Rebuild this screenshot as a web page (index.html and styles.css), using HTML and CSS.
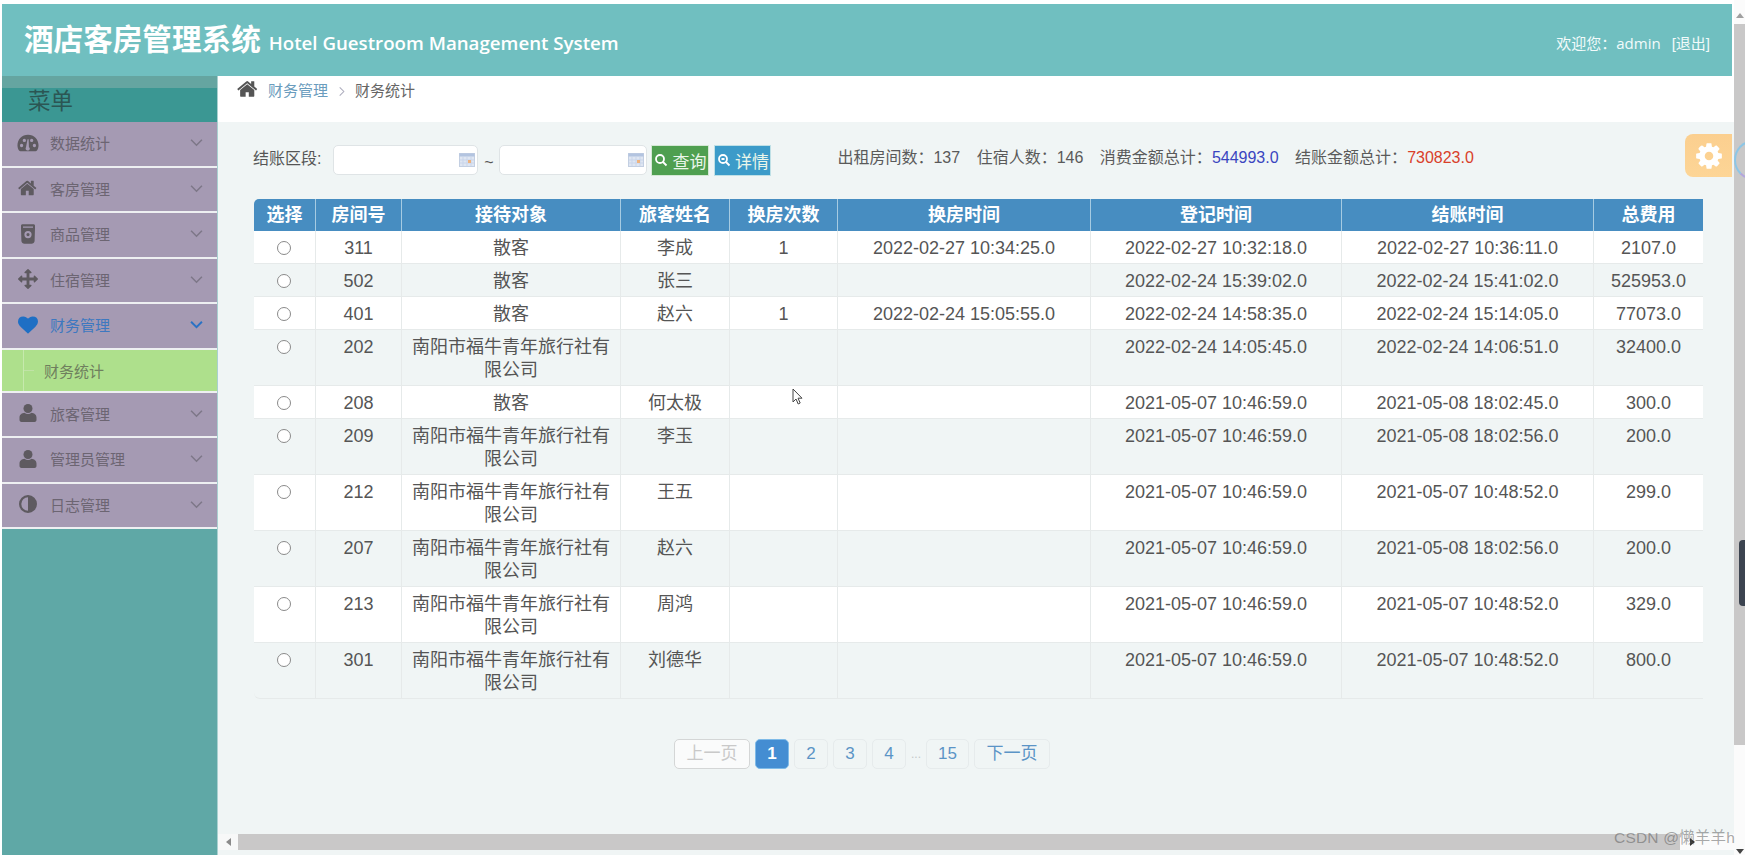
FILE: index.html
```html
<!DOCTYPE html>
<html lang="zh">
<head>
<meta charset="utf-8">
<title>酒店客房管理系统</title>
<link rel="stylesheet" href="styles.css">
</head>
<body>
<div class="window">
  <div class="app">
    <header class="topbar">
      <div class="brand"><span class="brand-cn">酒店客房管理系统</span><span class="brand-en">Hotel Guestroom Management System</span></div>
      <div class="welcome">欢迎您：<span class="admin">admin</span><span class="logout">[退出]</span></div>
    </header>
    <div class="below">
      <aside class="sidebar">
        <div class="menu-title">菜单</div>
        <ul class="menu">
          <li class="menu-item">
            <svg class="mi" viewBox="0 0 24 20"><path fill-rule="evenodd" d="M12 1C5.4 1 .5 6 .5 12.5c0 2.4.7 4.500 1.700 5.800.4.5 1 .7 1.500.7h16.600c.5 0 1.100-.2 1.500-.7 1-1.300 1.700-3.400 1.700-5.800C23.500 6 18.600 1 12 1zM5 14.500a1.800 1.800 0 1 1 0-3.600 1.800 1.800 0 0 1 0 3.600zm3-5.500a1.800 1.800 0 1 1 0-3.600A1.800 1.800 0 0 1 8 9zm6 7a2.300 2.300 0 1 1-4.200-1.300L11.500 6h1.200l.3 8.500c.6.300 1 .9 1 1.500zm5 -1.500a1.800 1.800 0 1 1 0-3.600 1.800 1.800 0 0 1 0 3.600zM16 9a1.800 1.800 0 1 1 0-3.600A1.800 1.800 0 0 1 16 9z"/></svg>
            <span class="mt">数据统计</span><svg class="chev" viewBox="0 0 12 8"><path d="M1 1.500l5 5 5-5"/></svg>
          </li>
          <li class="menu-item">
            <svg class="mi" viewBox="0 0 1792 1792"><path d="M1408 992v480q0 26-19 45t-45 19h-384v-384h-256v384h-384q-26 0-45-19t-19-45v-480q0-1 .5-3t.5-3l575-474 575 474q1 2 1 6zm223-69l-62 74q-8 9-21 11h-3q-13 0-21-7l-692-577-692 577q-12 8-24 7-13-2-21-11l-62-74q-8-10-7-23.500t11-21.500l719-599q32-26 76-26t76 26l244 204v-195q0-14 9-23t23-9h192q14 0 23 9t9 23v408l219 182q10 8 11 21.500t-7 23.500z"/></svg>
            <span class="mt">客房管理</span><svg class="chev" viewBox="0 0 12 8"><path d="M1 1.500l5 5 5-5"/></svg>
          </li>
          <li class="menu-item">
            <svg class="mi" viewBox="0 0 20 20"><path fill-rule="evenodd" d="M3 1.500C3 .7 4 .2 5 .2h10c1 0 2 .5 2 1.300v2.500l-.4 13c0 1.500-1.600 2.800-3 2.800H6.400c-1.400 0-3-1.300-3-2.800L3 4zM5 2.500v1.300h10V2.500zM10 7a3.600 3.600 0 1 0 0 7.200A3.600 3.600 0 0 0 10 7zm0 2a1.600 1.600 0 1 1 0 3.200A1.600 1.600 0 0 1 10 9z"/></svg>
            <span class="mt">商品管理</span><svg class="chev" viewBox="0 0 12 8"><path d="M1 1.500l5 5 5-5"/></svg>
          </li>
          <li class="menu-item">
            <svg class="mi" viewBox="0 0 1792 1792"><path d="M1792 896q0 26-19 45l-256 256q-19 19-45 19t-45-19-19-45v-128h-384v384h128q26 0 45 19t19 45-19 45l-256 256q-19 19-45 19t-45-19l-256-256q-19-19-19-45t19-45 45-19h128v-384h-384v128q0 26-19 45t-45 19-45-19l-256-256q-19-19-19-45t19-45l256-256q19-19 45-19t45 19 19 45v128h384v-384h-128q-26 0-45-19t-19-45 19-45l256-256q19-19 45-19t45 19l256 256q19 19 19 45t-19 45-45 19h-128v384h384v-128q0-26 19-45t45-19 45 19l256 256q19 19 19 45z"/></svg>
            <span class="mt">住宿管理</span><svg class="chev" viewBox="0 0 12 8"><path d="M1 1.500l5 5 5-5"/></svg>
          </li>
          <li class="menu-item active">
            <svg class="mi" viewBox="0 0 1792 1792"><path d="M896 1664q-26 0-44-18l-624-602q-10-8-27.500-26t-55.500-65.500-68-97.500-53.500-121-23.500-138q0-220 127-344t351-124q62 0 126.500 21.500t120 58 95.500 68.500 76 68q36-36 76-68t95.500-68.500 120-58 126.500-21.500q224 0 351 124t127 344q0 221-229 450l-623 600q-18 18-44 18z"/></svg>
            <span class="mt">财务管理</span><svg class="chev" viewBox="0 0 12 8"><path d="M1 1.500l5 5 5-5"/></svg>
          </li>
          <li class="submenu-item"><span class="tree"></span><span class="sub-text">财务统计</span></li>
          <li class="menu-item">
            <svg class="mi" viewBox="0 0 20 20"><circle cx="10" cy="5.500" r="4.500"/><path d="M1.500 17v-2.500C1.500 11.800 4 10 6.500 9.800c1 .8 2.200 1.200 3.500 1.200s2.500-.4 3.500-1.200c2.500.2 5 2 5 4.700V17c0 1.200-1 2-2 2H3.500c-1 0-2-.8-2-2z"/></svg>
            <span class="mt">旅客管理</span><svg class="chev" viewBox="0 0 12 8"><path d="M1 1.500l5 5 5-5"/></svg>
          </li>
          <li class="menu-item">
            <svg class="mi" viewBox="0 0 20 20"><circle cx="10" cy="5.500" r="4.500"/><path d="M1.500 17v-2.500C1.500 11.800 4 10 6.500 9.800c1 .8 2.200 1.200 3.500 1.200s2.500-.4 3.500-1.200c2.500.2 5 2 5 4.700V17c0 1.200-1 2-2 2H3.500c-1 0-2-.8-2-2z"/></svg>
            <span class="mt">管理员管理</span><svg class="chev" viewBox="0 0 12 8"><path d="M1 1.500l5 5 5-5"/></svg>
          </li>
          <li class="menu-item">
            <svg class="mi" viewBox="0 0 20 20"><path fill-rule="evenodd" d="M10 1a9 9 0 1 0 0 18 9 9 0 0 0 0-18zm0 2.300v13.400a6.700 6.700 0 0 1 0-13.400z"/></svg>
            <span class="mt">日志管理</span><svg class="chev" viewBox="0 0 12 8"><path d="M1 1.500l5 5 5-5"/></svg>
          </li>
        </ul>
      </aside>
      <main class="content">
        <nav class="crumbs">
          <svg class="home" viewBox="0 0 1792 1792"><path d="M1408 992v480q0 26-19 45t-45 19h-384v-384h-256v384h-384q-26 0-45-19t-19-45v-480q0-1 .5-3t.5-3l575-474 575 474q1 2 1 6zm223-69l-62 74q-8 9-21 11h-3q-13 0-21-7l-692-577-692 577q-12 8-24 7-13-2-21-11l-62-74q-8-10-7-23.500t11-21.500l719-599q32-26 76-26t76 26l244 204v-195q0-14 9-23t23-9h192q14 0 23 9t9 23v408l219 182q10 8 11 21.500t-7 23.500z"/></svg>
          <span class="crumb-link">财务管理</span>
          <svg class="crumb-sep" viewBox="0 0 8 12"><path d="M1.500 1.500L6 6l-4.500 4.500"/></svg>
          <span class="crumb-cur">财务统计</span>
        </nav>
        <div class="panel">
          <div class="panel-body">
            <div class="filters">
              <span class="f-label">结账区段:</span>
              <span class="date date-a"><input class="date-input" type="text"><svg class="cal" viewBox="0 0 16 14"><rect x=".5" y=".5" width="15" height="13" fill="#dfe6f2" stroke="#c3cfe2"/><rect x=".5" y=".5" width="15" height="3" fill="#b3c4e0"/><path d="M4 4v9M8 4v9M12 4v9M1 7h14M1 10h14" stroke="#c9d5ea" stroke-width="1"/><rect x="9" y="7" width="3" height="3" fill="#eeb27e"/></svg></span>
              <span class="tilde">~</span>
              <span class="date date-b"><input class="date-input" type="text"><svg class="cal" viewBox="0 0 16 14"><rect x=".5" y=".5" width="15" height="13" fill="#dfe6f2" stroke="#c3cfe2"/><rect x=".5" y=".5" width="15" height="3" fill="#b3c4e0"/><path d="M4 4v9M8 4v9M12 4v9M1 7h14M1 10h14" stroke="#c9d5ea" stroke-width="1"/><rect x="9" y="7" width="3" height="3" fill="#eeb27e"/></svg></span>
              <button class="btn btn-green" type="button"><svg class="sicon" viewBox="0 0 14 14"><circle cx="6" cy="6" r="4"/><path d="M9 9l3.500 3.500"/></svg>查询</button>
              <button class="btn btn-blue" type="button"><svg class="sicon" viewBox="0 0 14 14"><circle cx="6" cy="6" r="4"/><path d="M9 9l3.500 3.500M4.500 6h3"/></svg>详情</button>
              <div class="stats">
                <span>出租房间数：137</span>
                <span>住宿人数：146</span>
                <span>消费金额总计：<b class="sum-blue">544993.0</b></span>
                <span>结账金额总计：<b class="sum-red">730823.0</b></span>
              </div>
            </div>
            <table class="grid">
              <colgroup>
                <col class="c1"><col class="c2"><col class="c3"><col class="c4"><col class="c5"><col class="c6"><col class="c7"><col class="c8"><col class="c9">
              </colgroup>
              <thead>
                <tr><th>选择</th><th>房间号</th><th>接待对象</th><th>旅客姓名</th><th>换房次数</th><th>换房时间</th><th>登记时间</th><th>结账时间</th><th>总费用</th></tr>
              </thead>
              <tbody>
                <tr><td><input class="radio" type="radio" name="r"></td><td>311</td><td>散客</td><td>李成</td><td>1</td><td>2022-02-27 10:34:25.0</td><td>2022-02-27 10:32:18.0</td><td>2022-02-27 10:36:11.0</td><td>2107.0</td></tr>
                <tr><td><input class="radio" type="radio" name="r"></td><td>502</td><td>散客</td><td>张三</td><td></td><td></td><td>2022-02-24 15:39:02.0</td><td>2022-02-24 15:41:02.0</td><td>525953.0</td></tr>
                <tr><td><input class="radio" type="radio" name="r"></td><td>401</td><td>散客</td><td>赵六</td><td>1</td><td>2022-02-24 15:05:55.0</td><td>2022-02-24 14:58:35.0</td><td>2022-02-24 15:14:05.0</td><td>77073.0</td></tr>
                <tr><td><input class="radio" type="radio" name="r"></td><td>202</td><td>南阳市福牛青年旅行社有限公司</td><td></td><td></td><td></td><td>2022-02-24 14:05:45.0</td><td>2022-02-24 14:06:51.0</td><td>32400.0</td></tr>
                <tr><td><input class="radio" type="radio" name="r"></td><td>208</td><td>散客</td><td>何太极</td><td></td><td></td><td>2021-05-07 10:46:59.0</td><td>2021-05-08 18:02:45.0</td><td>300.0</td></tr>
                <tr><td><input class="radio" type="radio" name="r"></td><td>209</td><td>南阳市福牛青年旅行社有限公司</td><td>李玉</td><td></td><td></td><td>2021-05-07 10:46:59.0</td><td>2021-05-08 18:02:56.0</td><td>200.0</td></tr>
                <tr><td><input class="radio" type="radio" name="r"></td><td>212</td><td>南阳市福牛青年旅行社有限公司</td><td>王五</td><td></td><td></td><td>2021-05-07 10:46:59.0</td><td>2021-05-07 10:48:52.0</td><td>299.0</td></tr>
                <tr><td><input class="radio" type="radio" name="r"></td><td>207</td><td>南阳市福牛青年旅行社有限公司</td><td>赵六</td><td></td><td></td><td>2021-05-07 10:46:59.0</td><td>2021-05-08 18:02:56.0</td><td>200.0</td></tr>
                <tr><td><input class="radio" type="radio" name="r"></td><td>213</td><td>南阳市福牛青年旅行社有限公司</td><td>周鸿</td><td></td><td></td><td>2021-05-07 10:46:59.0</td><td>2021-05-07 10:48:52.0</td><td>329.0</td></tr>
                <tr><td><input class="radio" type="radio" name="r"></td><td>301</td><td>南阳市福牛青年旅行社有限公司</td><td>刘德华</td><td></td><td></td><td>2021-05-07 10:46:59.0</td><td>2021-05-07 10:48:52.0</td><td>800.0</td></tr>
              </tbody>
            </table>
            <div class="pager">
              <span class="pg pg-wide pg-off">上一页</span>
              <span class="pg pg-on">1</span>
              <span class="pg">2</span>
              <span class="pg">3</span>
              <span class="pg">4</span>
              <span class="pg-dots">...</span>
              <span class="pg pg-mid">15</span>
              <span class="pg pg-wide">下一页</span>
            </div>
          </div>
          <div class="hscroll">
            <span class="hs-btn"><i class="arrow-l"></i></span>
            <span class="hs-thumb"></span>
            <span class="hs-end"><i class="arrow-r"></i></span>
          </div>
        </div>
      </main>
    </div>
  </div>
  <div class="vscroll">
    <span class="vs-btn"><i class="arrow-u"></i></span>
    <span class="vs-thumb"></span>
    <span class="vs-end"><i class="arrow-d"></i></span>
  </div>
</div>
<div class="gear"><svg viewBox="0 0 1792 1792"><path d="M1152 896q0-106-75-181t-181-75-181 75-75 181 75 181 181 75 181-75 75-181zm512-109v222q0 12-8 23t-20 13l-185 28q-19 54-39 91 35 50 107 138 10 12 10 25t-9 23q-27 37-99 108t-94 71q-12 0-26-9l-138-108q-44 23-91 38-16 136-29 186-7 28-36 28h-222q-14 0-24.500-8.500t-11.500-21.500l-28-184q-49-16-90-37l-141 107q-10 9-25 9-14 0-25-11-126-114-165-168-7-10-7-23 0-12 8-23 15-21 51-66.500t54-70.500q-27-50-41-99l-183-27q-13-2-21-12.500t-8-23.500v-222q0-12 8-23t19-13l186-28q14-46 39-92-40-57-107-138-10-12-10-24 0-10 9-23 26-36 98.500-107.500t94.500-71.500q13 0 26 10l138 107q44-23 91-38 16-136 29-186 7-28 36-28h222q14 0 24.500 8.500t11.500 21.500l28 184q49 16 90 37l142-107q9-9 24-9 13 0 25 10 129 119 165 170 7 8 7 22 0 12-8 23-15 21-51 66.500t-54 70.500q26 50 41 98l183 28q13 2 21 12.500t8 23.500z"/></svg></div>
<div class="ring"></div>
<div class="side-thumb"></div>
<svg class="cursor" viewBox="0 0 12 18"><path d="M1 1v13l3-3 2.200 5 2-1-2.200-4.800H10z"/></svg>
<div class="watermark">CSDN @懒羊羊h</div>
</body>
</html>
```
FILE: styles.css
```css
* { box-sizing: border-box; }
html, body { margin: 0; padding: 0; height: 100%; overflow: hidden; }
body {
  background: #fff;
  color: #555;
  font-family: "Liberation Sans", "Noto Sans CJK SC", sans-serif;
}
.window { display: flex; height: 855px; padding-left: 2px; }
.app { flex: 1; min-width: 0; display: flex; flex-direction: column; padding-top: 4px; }

/* header */
.topbar {
  height: 72px;
  margin-right: 2px;
  background: #70bfc0;
  color: #fff;
  display: flex;
  align-items: center;
  justify-content: space-between;
  padding: 0 22px 0 22px;
}
.brand { display: flex; align-items: baseline; }
.brand-cn { font-size: 29.6px; font-weight: 700; line-height: 40px; }
.brand-en { font-family: "Open Sans", sans-serif; font-size: 18.700px; font-weight: 600; margin-left: 8px; }
.welcome { font-size: 15px; margin-top: 4px; color: #f2fbfb; }
.admin { font-family: "Open Sans", sans-serif; }
.logout { margin-left: 11px; }

.below { flex: 1; min-height: 0; display: flex; }

/* sidebar */
.sidebar { width: 216px; flex: none; background: #5fa8a6; border-right: 1px solid #a9d0d0; }
.menu-title {
  height: 46px;
  border-top: 12px solid #65a5a1;
  background: #3b9793;
  color: #2b5654;
  font-size: 22.500px;
  line-height: 24px;
  padding: 2px 0 0 26px;
}
.menu { list-style: none; margin: 0; padding: 0; }
.menu-item {
  height: 45.500px;
  background: #a59ab3;
  border-bottom: 2px solid #eef0f2;
  display: flex;
  align-items: center;
  padding: 0 14px 2px 15px;
  color: #6c6572;
  font-size: 15px;
}
.mi { width: 22px; height: 20px; fill: #5e5a60; flex: none; }
.mt { margin-left: 11px; flex: 1; }
.chev { width: 13px; height: 9px; fill: none; stroke: #7d7788; stroke-width: 1.400; }
.active .mi { fill: #1f6fc4; }
.active .mt { color: #3d78c0; }
.active .chev { stroke: #2a72c4; stroke-width: 1.800; }
.submenu-item {
  height: 43px;
  background: #aee08c;
  border-bottom: 2px solid #eef0f2;
  display: flex;
  align-items: center;
  color: #6f7f5e;
  font-size: 15px;
  padding-left: 21px;
}
.tree { width: 11px; height: 100%; position: relative; border-left: 1px solid #c6e9ad; display: flex; align-items: center; }
.tree::after { content: ""; width: 10px; height: 1px; background: #c0e2a6; }
.sub-text { margin-left: 10px; }

/* content */
.content { flex: 1; min-width: 0; display: flex; flex-direction: column; }
.crumbs {
  height: 46px;
  background: #fff;
  display: flex;
  align-items: flex-start;
  padding: 5px 0 0 19px;
  font-size: 15px;
  line-height: 20px;
}
.home { width: 22px; height: 22px; fill: #555; margin-top: -3px; }
.crumb-link { color: #6a9cbd; margin-left: 9px; }
.crumb-sep { width: 8px; height: 11px; fill: none; stroke: #aab; stroke-width: 1.100; margin: 5px 9px 0 10px; }
.crumb-cur { color: #666; }

.panel { flex: 1; min-height: 0; background: #f0f5f5; display: flex; flex-direction: column; overflow: hidden; }
.panel-body { flex: 1; min-height: 0; padding: 23px 0 0 36px; }

.filters { display: flex; align-items: center; height: 30px; margin-bottom: 24px; font-size: 16px; }
.f-label { margin-right: 12px; margin-bottom: 6px; margin-left: -1px; color: #555; }
.date {
  height: 30px;
  background: #fff;
  border: 1px solid #dfe4e6;
  border-radius: 5px;
  display: flex;
  align-items: center;
  padding-right: 2px;
}
.date-a { width: 145px; }
.date-b { width: 148px; }
.date-input { flex: 1; min-width: 0; border: 0; background: transparent; height: 100%; outline: none; }
.cal { width: 16px; height: 14px; flex: none; }
.tilde { width: 21px; text-align: center; margin-top: 6px; }
.btn {
  height: 31px;
  border: 1px solid #bfe0e6;
  color: #eaf6ea;
  font: inherit;
  font-size: 17px;
  padding: 0;
  display: flex;
  align-items: center;
  justify-content: center;
  margin-left: 4px;
}
.btn-green { width: 58px; background: #4f9f50; border-color: #d4e8d4; }
.btn-blue { width: 57px; margin-left: 5px; background: #3c9bc9; }
.sicon { width: 14px; height: 14px; fill: none; stroke: #fff; stroke-width: 1.800; margin-right: 4px; flex: none; }
.stats { display: flex; gap: 16.500px; margin-left: 66px; margin-bottom: 8px; color: #5a5a5a; white-space: nowrap; }
.stats b { font-weight: 400; }
.sum-blue { color: #3a45c0; }
.sum-red { color: #d9402a; }

/* table */
.grid {
  width: 1449px;
  table-layout: fixed;
  border-collapse: separate;
  border-spacing: 0;
  font-size: 18px;
}
.c1 { width: 62px; } .c2 { width: 86px; } .c3 { width: 219px; }
.c4 { width: 109px; } .c5 { width: 108px; } .c6 { width: 253px; }
.c7 { width: 251px; } .c8 { width: 252px; } .c9 { width: 109px; }
.grid th {
  background: #478dc1;
  color: #fff;
  font-weight: 700;
  line-height: 24px;
  padding: 4px 0;
  border-right: 1px solid #a6cbe2;
}
.grid th:first-child { border-top-left-radius: 5px; }
.grid th:last-child { border-right: 0; }
.grid td {
  padding: 6px 8px 3px;
  line-height: 23px;
  text-align: center;
  vertical-align: top;
  color: #555;
  background: #fff;
  border-right: 1px solid #e6eaea;
  border-bottom: 1px solid #e6eaea;
}
.grid td:first-child { padding-right: 10px; }
.grid td:last-child { border-right: 0; }
.grid tbody tr:nth-child(even) td { background: #f0f5f5; }
.grid tbody tr:last-child td:first-child { border-bottom-left-radius: 6px; }
.radio {
  appearance: none;
  width: 14px;
  height: 14px;
  margin: 4px auto 0;
  display: block;
  border: 1px solid #8a8a8a;
  border-radius: 50%;
  background: #fff;
}

/* pager */
.pager { display: flex; align-items: center; gap: 5px; margin: 40px 0 0 420px; font-size: 17px; }
.pg {
  width: 34px;
  height: 30px;
  border: 1px solid #e6ebec;
  border-radius: 5px;
  color: #5b94c6;
  line-height: 28px;
  text-align: center;
}
.pg-wide { width: 76px; }
.pg-mid { width: 43px; }
.pg-off { background: #fafbfb; color: #c9c9c9; border-color: #d4d6d6; }
.pg-on { background: #448dd2; border-color: #7fbbe8; color: #fff; font-weight: 700; }
.pg-dots { width: 10px; color: #c4c8c8; font-size: 12px; text-align: center; letter-spacing: 0; }

/* scrollbars */
.hscroll { height: 16px; margin-bottom: 5px; display: flex; flex: none; background: #f7f8f8; }
.hs-btn { width: 20px; display: flex; align-items: center; justify-content: center; }
.hs-thumb { width: 1442px; background: #c9c8c8; }
.hs-end { flex: 1; background: #fbfbfb; display: flex; align-items: center; padding-left: 10px; }
.arrow-l { border: 4px solid transparent; border-right: 5px solid #8a8a8a; border-left: 0; }
.arrow-r { border: 4px solid transparent; border-left: 5px solid #333; border-right: 0; }
.vscroll { width: 11px; flex: none; display: flex; flex-direction: column; background: #fbfbfb; }
.vs-btn { height: 24px; display: flex; align-items: center; justify-content: center; padding-top: 6px; }
.vs-thumb { height: 721px; background: #c9c8c8; }
.vs-end { flex: 1; display: flex; align-items: flex-end; justify-content: center; padding-bottom: 1px; }
.arrow-u { border: 4px solid transparent; border-bottom: 5px solid #a0a0a0; border-top: 0; }
.arrow-d { border: 4px solid transparent; border-top: 5px solid #444; border-bottom: 0; }

/* overlays */
.gear {
  position: absolute;
  left: 1685px;
  top: 134px;
  width: 47px;
  height: 43px;
  border-radius: 8px 0 0 8px;
  background: linear-gradient(#fbcf8f, #fdd596);
  display: flex;
  align-items: center;
  justify-content: center;
}
.gear svg { width: 30px; height: 30px; fill: #fff; }
.ring {
  position: absolute;
  left: 1734px;
  top: 140px;
  width: 40px;
  height: 40px;
  border-radius: 50%;
  border: 2px solid #8cc6e6;
  border-right-color: #b3a6dc;
  border-bottom-color: #b3a6dc;
}
.side-thumb {
  position: absolute;
  left: 1739px;
  top: 540px;
  width: 6px;
  height: 66px;
  background: #3c4450;
  border-radius: 4px 0 0 4px;
}
.cursor { position: absolute; left: 792px; top: 388px; width: 12px; height: 18px; fill: #fff; stroke: #444; stroke-width: 1; }
.watermark {
  position: absolute;
  left: 1614px;
  top: 828px;
  font-size: 15.500px;
  line-height: 20px;
  color: rgba(95, 95, 95, .55);
  letter-spacing: .2px;
}
```
